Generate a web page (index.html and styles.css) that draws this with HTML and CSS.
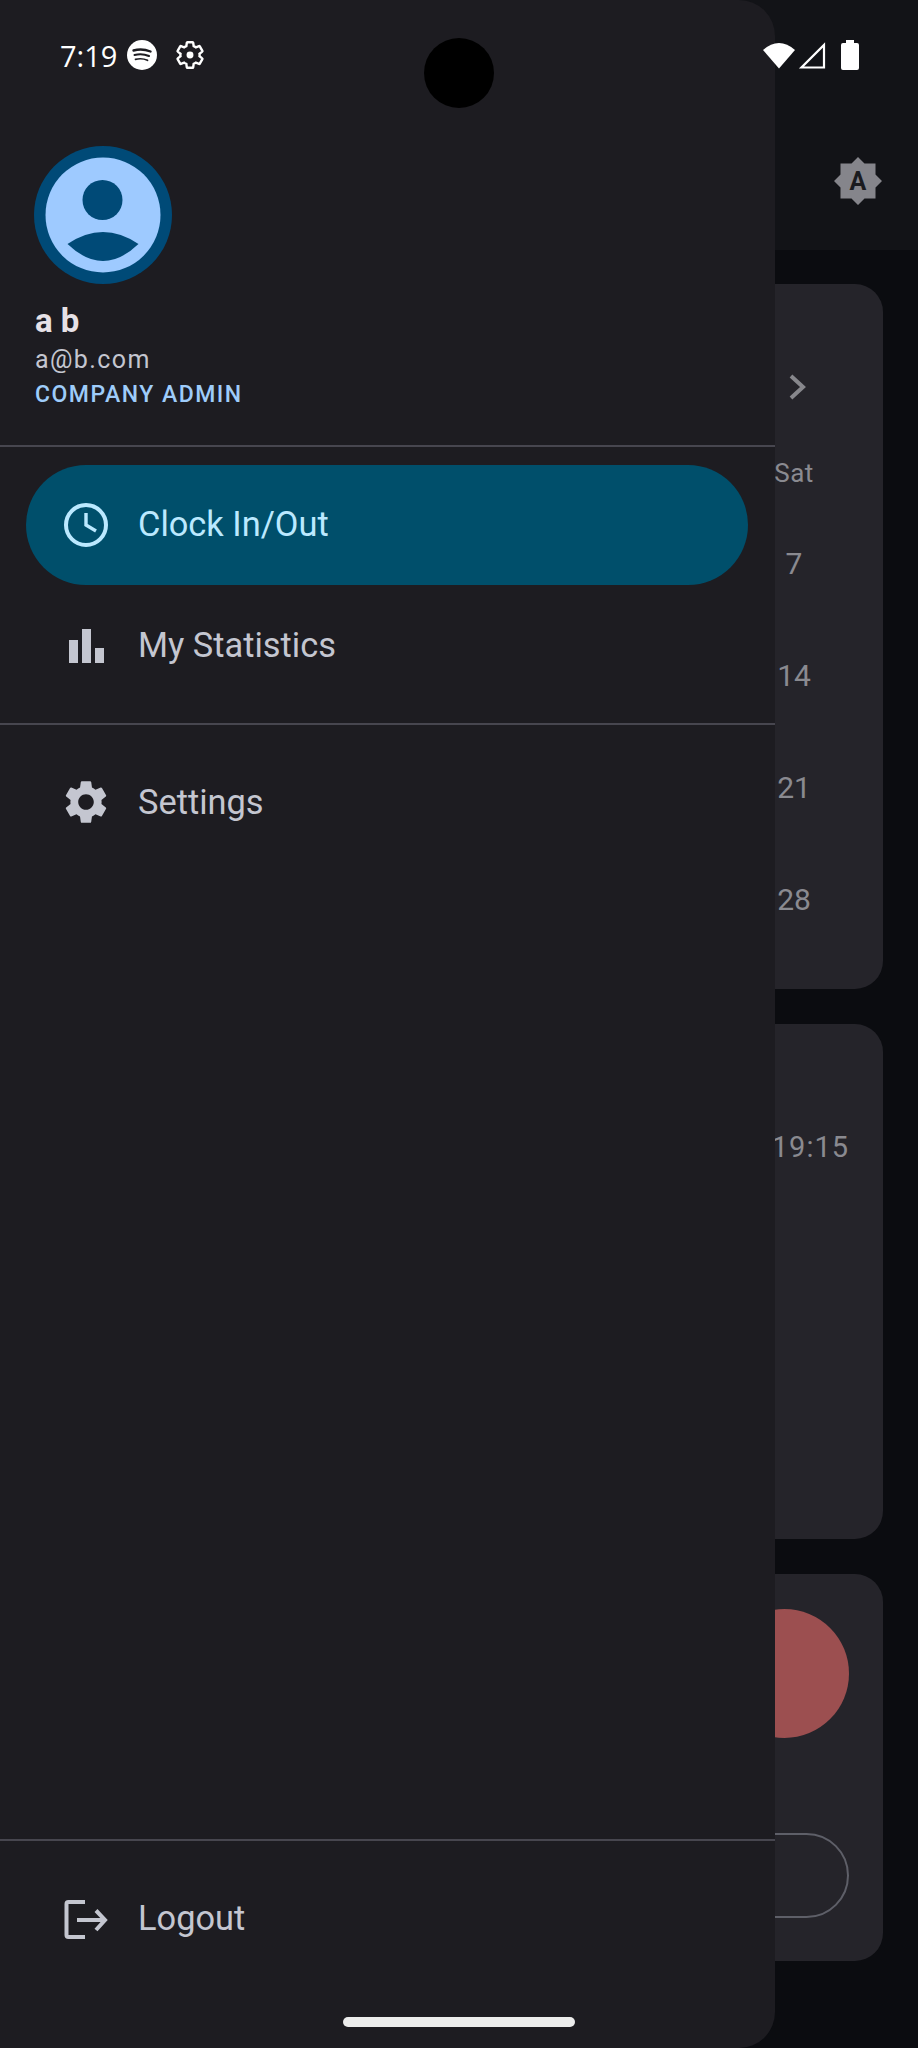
FILE: index.html
```html
<!DOCTYPE html>
<html lang="en">
<head>
  <meta charset="UTF-8" />
  <meta name="viewport" content="width=device-width, initial-scale=1.0" />
  <title>Clock In/Out</title>
  <link rel="stylesheet" href="styles.css">
</head>
<body>

<div class="screen">

  <!-- App behind the drawer -->
  <header class="appbar">
    <svg class="brightness" width="48" height="50" viewBox="0 0 48 50">
      <polygon fill="#85858b" points="24,1 30.5,7.5 41.5,7.5 41.5,18.5 48,25 41.5,31.5 41.5,42.5 30.5,42.5 24,49 17.5,42.5 6.5,42.5 6.5,31.5 0,25 6.5,18.5 6.5,7.5 17.5,7.5"/>
      <text class="brightness--letter" x="24" y="34" text-anchor="middle">A</text>
    </svg>
  </header>

  <main class="content">
    <section class="card card--calendar">
      <svg class="chevron" width="24" height="28" viewBox="0 0 24 28">
        <path d="M5 3l12 11L5 25" fill="none" stroke="#87878c" stroke-width="4"/>
      </svg>
      <div class="calendar--head">Sat</div>
      <div class="calendar--day">7</div>
      <div class="calendar--day">14</div>
      <div class="calendar--day">21</div>
      <div class="calendar--day">28</div>
    </section>

    <section class="card card--time">
      <div class="time--value">19:15</div>
    </section>

    <section class="card card--action">
      <div class="action--circle"></div>
      <div class="action--pill"></div>
    </section>
  </main>

  <!-- Navigation drawer -->
  <aside class="drawer">
    <div class="drawer--profile">
      <svg class="avatar" width="138" height="138" viewBox="0 0 138 138">
        <circle cx="69" cy="69" r="69" fill="#004a77"/>
        <circle cx="69" cy="69" r="57.5" fill="#9ecaff"/>
        <circle cx="68.500" cy="54" r="20" fill="#004a77"/>
        <path d="M33.500 98Q69 74 104.500 98Q69 132 33.500 98z" fill="#004a77"/>
      </svg>
      <div class="profile--name">a b</div>
      <div class="profile--email">a@b.com</div>
      <div class="profile--role">COMPANY ADMIN</div>
    </div>

    <nav class="drawer--nav">
      <a class="nav--item nav--active">
        <svg width="52" height="52" viewBox="0 0 52 52">
          <circle cx="26" cy="26" r="20" fill="none" stroke="currentColor" stroke-width="4"/>
          <path d="M26 14v12l10 6" fill="none" stroke="currentColor" stroke-width="3.400"/>
        </svg>
        <span>Clock In/Out</span>
      </a>
      <a class="nav--item">
        <svg width="52" height="52" viewBox="0 0 52 52">
          <path fill="currentColor" d="M9 20h9v23H9zM22 9h9v34h-9zM35 28h9v15h-9z"/>
        </svg>
        <span>My Statistics</span>
      </a>
    </nav>

    <nav class="drawer--nav drawer--settings">
      <a class="nav--item">
        <svg width="52" height="52" viewBox="0 0 24 24">
          <path fill="currentColor" d="M19.14 12.94c.04-.3.06-.61.06-.94 0-.32-.02-.64-.07-.94l2.03-1.58c.18-.14.23-.41.12-.61l-1.92-3.32c-.12-.22-.37-.29-.59-.22l-2.39.96c-.5-.38-1.03-.7-1.62-.94l-.36-2.54c-.04-.24-.24-.41-.48-.41h-3.84c-.24 0-.43.17-.47.41l-.36 2.54c-.59.24-1.13.57-1.62.94l-2.39-.96c-.22-.08-.47 0-.59.22L2.74 8.87c-.12.21-.08.47.12.61l2.03 1.58c-.05.3-.09.63-.09.94s.02.64.07.94l-2.03 1.58c-.18.14-.23.41-.12.61l1.92 3.32c.12.22.37.29.59.22l2.39-.96c.5.38 1.03.7 1.62.94l.36 2.54c.05.24.24.41.48.41h3.84c.24 0 .44-.17.47-.41l.36-2.54c.59-.24 1.13-.56 1.62-.94l2.39.96c.22.08.47 0 .59-.22l1.92-3.32c.12-.22.07-.47-.12-.61l-2.01-1.58zM12 15.600c-1.98 0-3.6-1.62-3.6-3.6s1.62-3.6 3.6-3.6 3.6 1.62 3.6 3.6-1.62 3.6-3.6 3.6z"/>
        </svg>
        <span>Settings</span>
      </a>
    </nav>

    <div class="drawer--footer">
      <a class="nav--item">
        <svg width="52" height="52" viewBox="0 0 52 52">
          <path d="M25 9H8.500a2 2 0 0 0-2 2v31a2 2 0 0 0 2 2H25" fill="none" stroke="currentColor" stroke-width="4"/>
          <path d="M17 27h27M36 17.500l9 9.500-9 10" fill="none" stroke="currentColor" stroke-width="4"/>
        </svg>
        <span>Logout</span>
      </a>
    </div>
  </aside>

  <!-- System overlays -->
  <div class="statusbar">
    <div class="statusbar--left">
      <span class="statusbar--time">7:19</span>
      <svg class="icon--spotify" width="30" height="30" viewBox="0 0 30 30">
        <circle cx="15" cy="15" r="15" fill="#fff"/>
        <path d="M6.500 10.500Q15 8 23.500 11.500" fill="none" stroke="#1d1c21" stroke-width="2.400" stroke-linecap="round"/>
        <path d="M7.500 15Q15 13 22 16" fill="none" stroke="#1d1c21" stroke-width="2" stroke-linecap="round"/>
        <path d="M8.500 19.300Q15 17.800 20.500 20.300" fill="none" stroke="#1d1c21" stroke-width="1.700" stroke-linecap="round"/>
      </svg>
      <svg class="icon--gear" width="32" height="32" viewBox="0 0 24 24">
        <path fill="none" stroke="#fff" stroke-width="1.800" d="M19.14 12.94c.04-.3.06-.61.06-.94 0-.32-.02-.64-.07-.94l2.03-1.58c.18-.14.23-.41.12-.61l-1.92-3.32c-.12-.22-.37-.29-.59-.22l-2.39.96c-.5-.38-1.03-.7-1.62-.94l-.36-2.54c-.04-.24-.24-.41-.48-.41h-3.84c-.24 0-.43.17-.47.41l-.36 2.54c-.59.24-1.13.57-1.62.94l-2.39-.96c-.22-.08-.47 0-.59.22L2.74 8.87c-.12.21-.08.47.12.61l2.03 1.58c-.05.3-.09.63-.09.94s.02.64.07.94l-2.03 1.58c-.18.14-.23.41-.12.61l1.92 3.32c.12.22.37.29.59.22l2.39-.96c.5.38 1.03.7 1.62.94l.36 2.54c.05.24.24.41.48.41h3.84c.24 0 .44-.17.47-.41l.36-2.54c.59-.24 1.13-.56 1.62-.94l2.39.96c.22.08.47 0 .59-.22l1.92-3.32c.12-.22.07-.47-.12-.61l-2.01-1.58z"/>
        <circle cx="12" cy="12" r="2.600" fill="#fff"/>
      </svg>
    </div>
    <div class="statusbar--right">
      <svg width="32" height="28" viewBox="0 0 32 28">
        <path fill="#fff" d="M16 27.500L0 9Q16-5 32 9z"/>
      </svg>
      <svg width="28" height="28" viewBox="0 0 28 28">
        <path fill="none" stroke="#fff" stroke-width="2.200" d="M26 4v22.500H3.500z"/>
      </svg>
      <svg width="18" height="30" viewBox="0 0 18 30">
        <path fill="#fff" d="M5 0h8v3h3a2 2 0 0 1 2 2v23a2 2 0 0 1-2 2H2a2 2 0 0 1-2-2V5a2 2 0 0 1 2-2h3z"/>
      </svg>
    </div>
  </div>

  <div class="camera"></div>
  <div class="home-indicator"></div>
</div>

</body>
</html>
```

FILE: styles.css
```css
* {
  box-sizing: border-box;
}

body {
  margin: 0;
  font-family: Roboto, "Liberation Sans", sans-serif;
  background-color: #0b0c10;
}

.screen {
  position: relative;
  width: 918px;
  height: 2048px;
  overflow: hidden;
  background-color: #0b0c10;
}

/* App behind the drawer */
.appbar {
  display: flex;
  justify-content: flex-end;
  align-items: center;
  height: 250px;
  padding: 112px 36px 0 0;
  background-color: #121317;
}

.brightness--letter {
  font-size: 25px;
  font-weight: 700;
  fill: #1a1b1f;
}

.content {
  display: flex;
  flex-direction: column;
  gap: 35px;
  padding: 34px 35px 0;
}

.card {
  display: flex;
  flex-direction: column;
  align-items: flex-end;
  border-radius: 28px;
  background-color: #25242a;
  color: #8a8a90;
}

.card--calendar {
  height: 705px;
  padding: 89px 49px 0 0;
  font-size: 30px;
}

.chevron {
  flex: none;
  margin-right: 24px;
  margin-bottom: 57px;
}

.calendar--head {
  flex: none;
  width: 80px;
  font-size: 26px;
  line-height: 30px;
  letter-spacing: 0.5px;
  text-align: center;
}

.calendar--day {
  flex: none;
  width: 80px;
  height: 112px;
  line-height: 36px;
  text-align: center;
}

.calendar--head + .calendar--day {
  margin-top: 58px;
}

.card--time {
  height: 515px;
  padding: 106px 34px 0 0;
}

.time--value {
  font-size: 29px;
  line-height: 34px;
  letter-spacing: 1px;
}

.card--action {
  height: 387px;
  padding: 35px 34px 0 0;
}

.action--circle {
  width: 129px;
  height: 129px;
  border-radius: 50%;
  background-color: #9c4f50;
}

.action--pill {
  width: 300px;
  height: 85px;
  margin-top: 95px;
  border: 2px solid #5e5f68;
  border-radius: 43px;
}

/* Drawer */
.drawer {
  position: absolute;
  top: 0;
  left: 0;
  display: flex;
  flex-direction: column;
  width: 775px;
  height: 2048px;
  border-radius: 0 36px 36px 0;
  background-color: #1d1c21;
  color: #c4c6d0;
}

.drawer--profile {
  height: 447px;
  padding: 146px 34px 0 35px;
  border-bottom: 2px solid #47464f;
}

.avatar {
  display: block;
  margin-left: -1px;
}

.profile--name {
  margin-top: 19px;
  font-size: 33px;
  font-weight: 700;
  line-height: 36px;
  color: #e6e1e6;
}

.profile--email {
  margin-top: 5px;
  font-size: 25px;
  line-height: 32px;
  letter-spacing: 1.4px;
}

.profile--role {
  margin-top: 5px;
  font-size: 23px;
  font-weight: 500;
  line-height: 28px;
  letter-spacing: 1.5px;
  color: #9eccfa;
}

.drawer--nav {
  display: flex;
  flex-direction: column;
  gap: 1px;
  height: 278px;
  padding-top: 18px;
  border-bottom: 2px solid #47464f;
}

.drawer--settings {
  flex: 1;
  border-bottom: 0;
  padding-top: 17px;
}

.drawer--settings .nav--item span {
  padding-bottom: 0;
}

.drawer--footer {
  height: 209px;
  padding-top: 18px;
  border-top: 2px solid #47464f;
}

.nav--item {
  display: flex;
  align-items: center;
  gap: 26px;
  height: 120px;
  padding-left: 60px;
  font-size: 34.4px;
}

.nav--item span {
  padding-bottom: 2px;
}

.nav--active {
  margin: 0 27px 0 26px;
  padding-left: 34px;
  border-radius: 60px;
  background-color: #004f6b;
  color: #bbe9ff;
}

/* System overlays */
.statusbar {
  position: absolute;
  top: 0;
  left: 0;
  display: flex;
  justify-content: space-between;
  align-items: center;
  width: 100%;
  height: 110px;
  padding: 0 59px 0 60px;
  font-family: "Open Sans", sans-serif;
  color: #fff;
}

.statusbar--left,
.statusbar--right {
  display: flex;
  align-items: center;
}

.statusbar--time {
  margin-right: 10px;
  font-size: 29px;
}

.icon--gear {
  margin-left: 17px;
}

.statusbar--right {
  gap: 3px;
}

.statusbar--right svg:last-child {
  margin-left: 12px;
}

.camera {
  position: absolute;
  top: 38px;
  left: 424px;
  width: 70px;
  height: 70px;
  border-radius: 50%;
  background-color: #000;
}

.home-indicator {
  position: absolute;
  top: 2017px;
  left: 343px;
  width: 232px;
  height: 10px;
  border-radius: 5px;
  background-color: #ececec;
}
```
